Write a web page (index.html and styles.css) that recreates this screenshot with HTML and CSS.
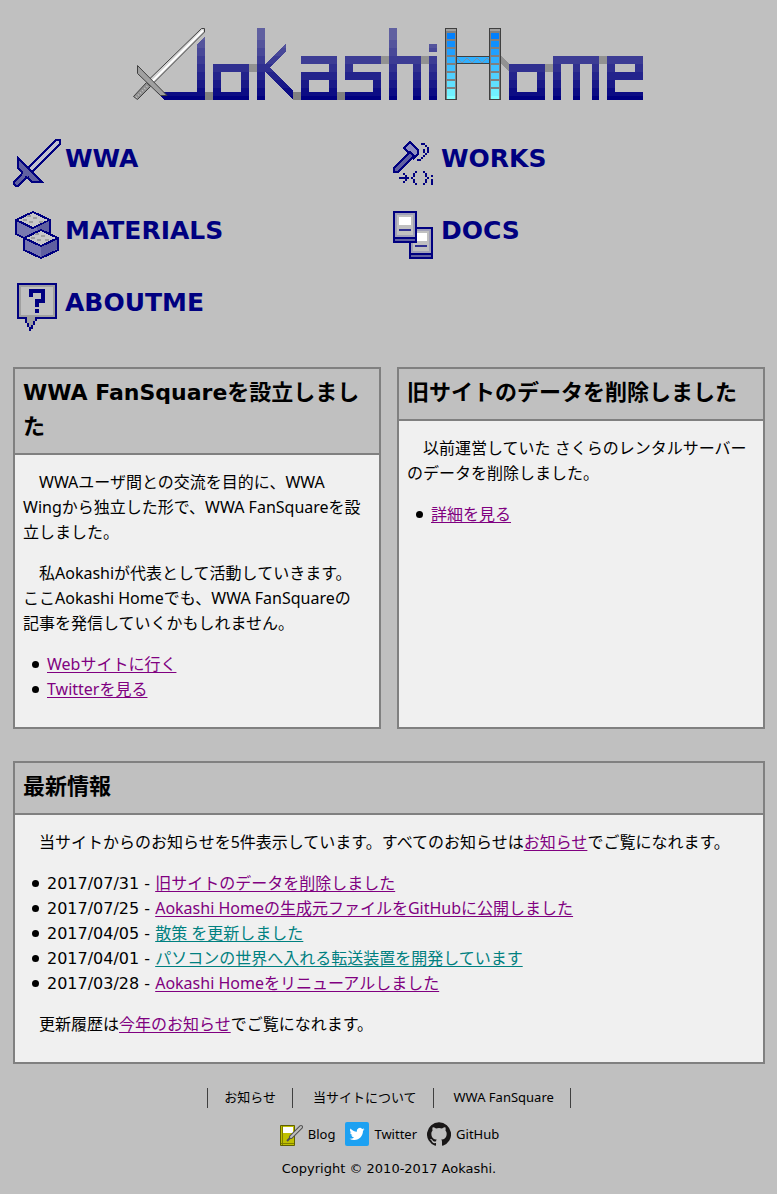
FILE: index.html
```html
<!DOCTYPE html>
<html lang="ja">
<head>
<meta charset="utf-8">
<meta name="viewport" content="width=device-width, initial-scale=1">
<title>Aokashi Home</title>
<link rel="stylesheet" href="styles.css">
</head>
<body>
<header class="site-header">
<h1 class="logo">
<svg viewBox="133 28 512 72" width="512" height="72" role="img" aria-label="Aokashi Home" shape-rendering="crispEdges">
<defs>
<linearGradient id="ink" gradientUnits="userSpaceOnUse" x1="0" y1="28" x2="0" y2="100">
<stop offset="0" stop-color="#6060a0"/><stop offset=".1667" stop-color="#6060a0"/>
<stop offset=".1667" stop-color="#54549c"/><stop offset=".2778" stop-color="#54549c"/>
<stop offset=".2778" stop-color="#484898"/><stop offset=".3889" stop-color="#484898"/>
<stop offset=".3889" stop-color="#3c3c94"/><stop offset=".5" stop-color="#3c3c94"/>
<stop offset=".5" stop-color="#303090"/><stop offset=".6111" stop-color="#303090"/>
<stop offset=".6111" stop-color="#24248c"/><stop offset=".7222" stop-color="#24248c"/>
<stop offset=".7222" stop-color="#181888"/><stop offset=".8333" stop-color="#181888"/>
<stop offset=".8333" stop-color="#0c0c84"/><stop offset=".9444" stop-color="#0c0c84"/>
<stop offset=".9444" stop-color="#000080"/><stop offset="1" stop-color="#000080"/>
</linearGradient>
<g id="tower">
<path fill="#404040" d="M0 28h12v72H0z"/><path fill="#808080" d="M1 29h10v70H1z"/><path fill="#a0a0a0" d="M1 29h10v2H1z"/>
<path fill="#0080ff" d="M2 33h8v6H2z"/><path fill="#1090ff" d="M2 41h8v6H2z"/><path fill="#20a0ff" d="M2 49h8v6H2z"/><path fill="#30b0ff" d="M2 57h8v6H2z"/><path fill="#40c0ff" d="M2 65h8v6H2z"/><path fill="#50d0ff" d="M2 73h8v6H2z"/><path fill="#60e0ff" d="M2 81h8v6H2z"/><path fill="#70f0ff" d="M2 89h8v7H2z"/><path fill="#80ffff" d="M2 96h8v3H2z"/>
</g>
</defs>
<path fill="#808080" d="M205 92h8v8h-8zM293 92h8v8h-8zM337 92h8v8h-8z"/>
<path fill="#929292" d="M249 64h8v8h-8zM381 56h8v8h-8zM421 56h8v8h-8zM501 56l8 8v8l-8-8zM545 64h8v8h-8zM599 56h8v8h-8z"/>
<g fill="url(#ink)" fill-rule="evenodd">
<path d="M205 36v64h-41l-8-8h41V44z"/>
<path d="M213 64h36v36h-36zM221 72v20h20V72z"/>
<path d="M257 28h8v36l21-21v8l-16 17 23 23v9l-28-28v28h-8z"/>
<path d="M301 56h36v44h-36V72h28v-8h-28zM309 80v12h20V80z"/>
<path d="M345 56h36v8h-28v8h28v28h-36v-8h28V80h-28z"/>
<path d="M389 28h8v28h24v44h-8V64h-16v36h-8z"/>
<path d="M429 44h8v8h-8zM429 56h8v44h-8z"/>
<path d="M509 64h36v36h-36zM517 72v20h20V72z"/>
<path d="M553 56h46v44h-7V64h-12v36h-7V64h-12v36h-8z"/>
<path d="M607 56h36v24h-28v12h28v8h-36zM615 64v8h20v-8z"/>
</g>
<path fill="#30b0ff" d="M457 56h32v8h-32z"/>
<path fill="none" stroke="#8090a0" shape-rendering="auto" d="M457 58l5 5 5-5 5 5 5-5 5 5 5-5 2 2"/>
<path fill="#404040" d="M457 56h32v1h-32zM457 63h32v1h-32z"/>
<use href="#tower" x="445"/><use href="#tower" x="489"/>
<g shape-rendering="auto">
<path fill="#d0d0d0" stroke="#404040" d="M201.500 28.500h3v3.500l-51 51-4-4z"/>
<path fill="none" stroke="#fff" stroke-width="2" d="M203 30.500l-51 51"/>
<path fill="#909090" stroke="#404040" d="M133.500 96.500l4 3 13-13-4-4z"/>
<path fill="none" stroke="#c0c0c0" stroke-dasharray="1 2" stroke-width="2" d="M136 97.500l12-12"/>
<path fill="#a0a0a0" stroke="#404040" d="M137.500 65.500v8l23 22h6.500z"/>
</g>
</svg>
</h1>
</header>

<nav class="menu" aria-label="メインメニュー">
<a class="menu-item" href="#wwa">
<svg class="menu-icon" viewBox="0 0 24 24" stroke="#000080" stroke-width="1" shape-rendering="crispEdges" aria-hidden="true">
<path fill="#c0c0d0" d="M21.500 .5h2v2l-14 14-2-2z"/><path fill="#6060a0" d="M.5 21.500v1l1 1h1l5-5-2-2zM2.500 9.500l12 12h-5l-7-7z"/><path stroke="#6060a0" stroke-width="2" d="M5 17l3 1"/>
</svg><span>WWA</span></a>
<a class="menu-item" href="#works">
<svg class="menu-icon" viewBox="0 0 24 24" shape-rendering="crispEdges" aria-hidden="true">
<g stroke="#000080" fill="#6060a0"><path d="M2.500 14.500l8-8 2 2-8 8h-2z"/><path fill="#9090c0" d="M10.500 1.500l-3 3 2 2h1l2 2v1l2-2v-2z"/></g>
<path fill="#000080" d="M16 2h2v1h-2zM18 3h1v1h-1zM19 4h1v3h-1zM18 7h1v1h-1zM17 8h1v1h-1zM16 9h1v1h-1zM14 10h2v1h-2zM17 5h1v2h-1z"/>
<path fill="#000080" d="M5 19h5v1H5zM8 18h1v1H8zM7 17h1v1H7zM8 20h1v1H8zM7 21h1v1H7zM13 16h1v1h-1zM12 17h1v2h-1zM11 19h1v1h-1zM12 20h1v2h-1zM13 22h1v1h-1zM17 16h1v1h-1zM18 17h1v2h-1zM19 19h1v1h-1zM18 20h1v2h-1zM17 22h1v1h-1zM21 18h1v1h-1zM21 20h1v3h-1z"/>
</svg><span>WORKS</span></a>
<a class="menu-item" href="#materials">
<svg class="menu-icon" viewBox="0 0 24 24" stroke="#000080" shape-rendering="crispEdges" aria-hidden="true">
<path fill="#7878b0" d="M1.500 4.500v7l8 4 9-4v-7l-9 4z"/><path fill="#c8c8c8" d="M1.500 4.500l8.500-4 8.500 4-8.500 4z"/>
<path fill="#6060a0" stroke="none" d="M12 8l6-3v6l-6 2z"/><path stroke="#a0a0a0" d="M5 4.500h2M8 5.500h2M10 3.500h2M7 2.500h2M13 5.500h2"/>
<path fill="#7878b0" d="M5.500 13.500v6l8.500 4 8.500-4v-6l-8.500 4z"/><path fill="#6060a0" stroke="none" d="M14 17l8-4v6l-8 4z"/><path fill="#c8c8c8" d="M5.500 13.500l8.500-4 8.500 4-8.500 4z"/>
<path stroke="#a0a0a0" d="M9 13.500h2M12 14.500h2M14 12.500h2M11 11.500h2M16 14.500h2"/>
</svg><span>MATERIALS</span></a>
<a class="menu-item" href="#docs">
<svg class="menu-icon" viewBox="0 0 24 24" shape-rendering="crispEdges" aria-hidden="true">
<defs><g id="sheet"><path fill="#000080" d="M0 0h12v16H0z"/><path fill="#a0a0b8" d="M1 1h10v12H1z"/><path fill="#c0c0c0" d="M2 2h8v10H2z"/><path fill="#fff" d="M3 3h6v4H3z"/><path fill="#303090" d="M3 9h6v1H3z"/><path fill="#6060a0" d="M1 14h10v1H1z"/></g></defs>
<use href="#sheet" x="10" y="8"/><use href="#sheet" x="2"/>
</svg><span>DOCS</span></a>
<a class="menu-item" href="#aboutme">
<svg class="menu-icon" viewBox="0 0 24 24" shape-rendering="crispEdges" aria-hidden="true">
<path fill="#000080" d="M2 0h20v18H12v1h-1v2h-1v2H9v1H8v-2H7v-2H6v-2H2z"/><path fill="#a0a0a0" d="M3 1h18v16H11v2h-1v2H9v1H8v-2H7v-3H3z"/><path fill="#c0c0c0" d="M4 2h16v14H4z"/>
<path fill="#000080" d="M8 3h8v7h-3v2h-2V8h3V5h-4v2H8zM11 13h2v2h-2z"/>
</svg><span>ABOUTME</span></a>
</nav>

<main>
<div class="cards">
<section class="card">
<h2>WWA FanSquareを設立しました</h2>
<div class="card-body">
<p>WWAユーザ間との交流を目的に、WWA<br>Wingから独立した形で、WWA FanSquareを設立しました。</p>
<p>私Aokashiが代表として活動していきます。<br>ここAokashi Homeでも、WWA FanSquareの<br>記事を発信していくかもしれません。</p>
<ul><li><a href="#fansquare">Webサイトに行く</a></li><li><a href="#twitter">Twitterを見る</a></li></ul>
</div>
</section>
<section class="card">
<h2>旧サイトのデータを削除しました</h2>
<div class="card-body">
<p>以前運営していた さくらのレンタルサーバーのデータを削除しました。</p>
<ul><li><a href="#detail">詳細を見る</a></li></ul>
</div>
</section>
</div>
<section class="card">
<h2>最新情報</h2>
<div class="card-body">
<p>当サイトからのお知らせを5件表示しています。すべてのお知らせは<a href="#news">お知らせ</a>でご覧になれます。</p>
<ul class="news">
<li><time datetime="2017-07-31">2017/07/31 - </time><a href="#n5">旧サイトのデータを削除しました</a></li>
<li><time datetime="2017-07-25">2017/07/25 - </time><a href="#n4">Aokashi Homeの生成元ファイルをGitHubに公開しました</a></li>
<li><time datetime="2017-04-05">2017/04/05 - </time><a class="unread" href="#n3">散策 を更新しました</a></li>
<li><time datetime="2017-04-01">2017/04/01 - </time><a class="unread" href="#n2">パソコンの世界へ入れる転送装置を開発しています</a></li>
<li><time datetime="2017-03-28">2017/03/28 - </time><a href="#n1">Aokashi Homeをリニューアルしました</a></li>
</ul>
<p>更新履歴は<a href="#this-year">今年のお知らせ</a>でご覧になれます。</p>
</div>
</section>
</main>

<footer class="site-footer">
<ul class="footer-links"><li><a href="#news">お知らせ</a></li><li><a href="#about">当サイトについて</a></li><li><a href="#fansquare">WWA FanSquare</a></li></ul>
<ul class="social">
<li><a href="#blog"><svg viewBox="0 0 24 24" aria-hidden="true"><path fill="#c0c000" stroke="#606000" d="M1.500 3.500h14v20h-14z"/><path stroke="#808000" d="M3.500 4v19M2 21.500h13"/><path fill="#fff" d="M4 5h10v6H4z"/><path stroke="#505050" stroke-width="4" stroke-linecap="round" d="M22 5L12 15"/><path stroke="#505050" stroke-width="2" d="M12 15l-4 4"/><path stroke="#c0c0c0" stroke-width="2" stroke-linecap="round" d="M22 5L12 15"/></svg>Blog</a></li>
<li><a href="#twitter"><svg viewBox="0 0 24 24" aria-hidden="true"><rect width="24" height="24" rx="2" fill="#1da1f2"/><path fill="#fff" transform="translate(4.500 4.500) scale(.625)" d="M23.950 4.570a10 10 0 0 1-2.820.77 4.960 4.960 0 0 0 2.160-2.720c-.95.550-2 .95-3.130 1.180a4.920 4.920 0 0 0-8.380 4.480C7.690 8.090 4.070 6.130 1.640 3.160a4.920 4.920 0 0 0 1.520 6.570 4.900 4.900 0 0 1-2.230-.61v.06a4.920 4.920 0 0 0 3.950 4.830 5 5 0 0 1-2.210.08 4.940 4.940 0 0 0 4.600 3.420A9.870 9.870 0 0 1 0 19.540a13.990 13.990 0 0 0 7.550 2.210c9.050 0 14-7.500 14-13.980 0-.21 0-.42-.02-.63a9.940 9.940 0 0 0 2.460-2.550z"/></svg>Twitter</a></li>
<li><a href="#github"><svg viewBox="0 0 24 24" aria-hidden="true"><path fill="#191717" d="M12 .3a12 12 0 0 0-3.790 23.390c.6.110.82-.26.820-.58v-2.030c-3.340.72-4.040-1.610-4.040-1.610-.55-1.390-1.340-1.760-1.340-1.760-1.090-.74.080-.73.080-.73 1.200.090 1.840 1.240 1.840 1.240 1.070 1.830 2.810 1.300 3.490 1 .11-.78.420-1.310.76-1.610-2.670-.3-5.470-1.330-5.470-5.930 0-1.310.47-2.380 1.240-3.220-.12-.3-.54-1.520.12-3.180 0 0 1.010-.32 3.300 1.230a11.500 11.500 0 0 1 6.010 0c2.290-1.550 3.300-1.230 3.300-1.230.66 1.660.24 2.880.12 3.180.77.84 1.230 1.910 1.230 3.220 0 4.610-2.800 5.620-5.480 5.920.43.370.82 1.100.82 2.220v3.290c0 .32.220.7.830.58A12 12 0 0 0 12 .3"/></svg>GitHub</a></li>
</ul>
<p class="copyright">Copyright © 2010-2017 Aokashi.</p>
</footer>
</body>
</html>
```
FILE: styles.css
```css
* { box-sizing: border-box; }
body {
  margin: 0;
  padding: 28px 12px 12px 13px;
  background: #c0c0c0;
  color: #000;
  font: 16px/25px "Noto Sans", "Noto Sans CJK JP", sans-serif;
}
h1, h2, p, ul { margin: 0; padding: 0; }
.logo { display: flex; justify-content: center; line-height: 0; }
.logo svg { max-width: 100%; }
.menu {
  display: grid;
  grid-template-columns: 1fr 1fr;
  row-gap: 24px;
  margin-top: 39px;
}
.menu-item {
  display: flex;
  gap: 4px;
  color: #000080;
  font-family: "DejaVu Sans", sans-serif;
  font-size: 25px;
  font-weight: 700;
  line-height: 40px;
  text-decoration: none;
}
.menu-icon { flex: none; width: 48px; height: 48px; fill: none; }
main { display: grid; gap: 32px; margin-top: 36px; }
.cards { display: grid; grid-template-columns: 1fr 1fr; gap: 16px; }
.card { border: 2px solid #808080; background: #f0f0f0; }
.card h2 {
  padding: 7px 8px 9px;
  border-bottom: 2px solid #808080;
  background: #c0c0c0;
  font-family: "DejaVu Sans", "Noto Sans CJK JP", sans-serif;
  font-size: 22px;
  line-height: 34px;
}
.card-body {
  display: grid;
  align-content: start;
  gap: 16px;
  padding: 15px 8px 25px;
}
.card p { text-indent: 16px; }
.card ul { padding-left: 24px; list-style: none; }
.card li::before {
  content: "";
  display: inline-block;
  width: 7px;
  height: 7px;
  margin: 0 8px 0 -15px;
  border-radius: 50%;
  background: #000;
  vertical-align: 2px;
}
.card a { color: #800080; text-underline-offset: 2px; }
.card a.unread { color: #008080; }
.news time { font-family: "DejaVu Sans", sans-serif; line-height: 1; white-space: pre; }
.site-footer {
  display: flex;
  flex-direction: column;
  align-items: center;
  margin-top: 24px;
  font-size: 13px;
  line-height: 20px;
}
.site-footer ul { display: flex; list-style: none; }
.site-footer a { color: #000; text-decoration: none; }
.footer-links { gap: 4px; }
.footer-links li { padding: 0 16px; border-right: 1px solid #404040; }
.footer-links li:first-child { border-left: 1px solid #404040; }
.footer-links a { display: block; line-height: 18px; }
.social { gap: 10px; margin-top: 14px; }
.social a { display: flex; align-items: center; gap: 5px; }
.social svg { width: 24px; height: 24px; fill: none; }
.footer-links li { height: 20px; }
.copyright { margin-top: 13px; font-family: "DejaVu Sans", sans-serif; }
```
